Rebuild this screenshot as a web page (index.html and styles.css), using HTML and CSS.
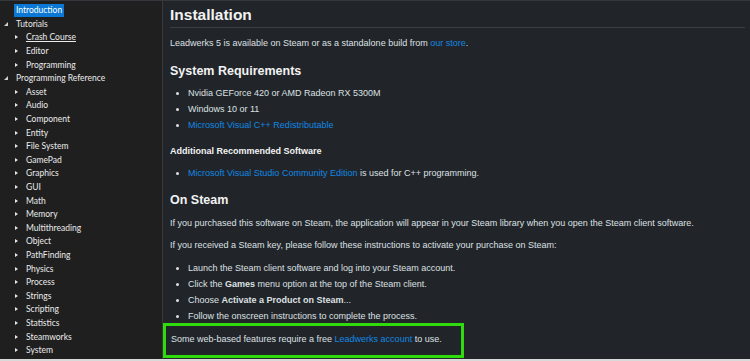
FILE: index.html
```html
<!DOCTYPE html>
<html>
<head>
    <title>Installation</title>
    <link rel="stylesheet" href="styles.css">
</head>
<body>
    <div class="app">
        <nav class="sidebar">
            <div class="node"><span class="label selected">Introduction</span></div>
            <div class="node"><span class="arrow open"></span><span class="label">Tutorials</span></div>
            <div class="node child"><span class="arrow"></span><span class="label hover">Crash Course</span></div>
            <div class="node child"><span class="arrow"></span><span class="label">Editor</span></div>
            <div class="node child"><span class="arrow"></span><span class="label">Programming</span></div>
            <div class="node"><span class="arrow open"></span><span class="label">Programming Reference</span></div>
            <div class="node child"><span class="arrow"></span><span class="label">Asset</span></div>
            <div class="node child"><span class="arrow"></span><span class="label">Audio</span></div>
            <div class="node child"><span class="arrow"></span><span class="label">Component</span></div>
            <div class="node child"><span class="arrow"></span><span class="label">Entity</span></div>
            <div class="node child"><span class="arrow"></span><span class="label">File System</span></div>
            <div class="node child"><span class="arrow"></span><span class="label">GamePad</span></div>
            <div class="node child"><span class="arrow"></span><span class="label">Graphics</span></div>
            <div class="node child"><span class="arrow"></span><span class="label">GUI</span></div>
            <div class="node child"><span class="arrow"></span><span class="label">Math</span></div>
            <div class="node child"><span class="arrow"></span><span class="label">Memory</span></div>
            <div class="node child"><span class="arrow"></span><span class="label">Multithreading</span></div>
            <div class="node child"><span class="arrow"></span><span class="label">Object</span></div>
            <div class="node child"><span class="arrow"></span><span class="label">PathFinding</span></div>
            <div class="node child"><span class="arrow"></span><span class="label">Physics</span></div>
            <div class="node child"><span class="arrow"></span><span class="label">Process</span></div>
            <div class="node child"><span class="arrow"></span><span class="label">Strings</span></div>
            <div class="node child"><span class="arrow"></span><span class="label">Scripting</span></div>
            <div class="node child"><span class="arrow"></span><span class="label">Statistics</span></div>
            <div class="node child"><span class="arrow"></span><span class="label">Steamworks</span></div>
            <div class="node child"><span class="arrow"></span><span class="label">System</span></div>
        </nav>

        <main class="content">
            <h1>Installation</h1>
            <p class="intro">Leadwerks 5 is available on Steam or as a standalone build from <a href="#">our store</a>.</p>

            <h2>System Requirements</h2>
            <ul class="req-list">
                <li>Nvidia GEForce 420 or AMD Radeon RX 5300M</li>
                <li>Windows 10 or 11</li>
                <li><a href="#">Microsoft Visual C++ Redistributable</a></li>
            </ul>

            <h3>Additional Recommended Software</h3>
            <ul class="soft-list">
                <li><a href="#">Microsoft Visual Studio Community Edition</a> is used for C++ programming.</li>
            </ul>

            <h2 class="steam-title">On Steam</h2>
            <p class="steam-text">If you purchased this software on Steam, the application will appear in your Steam library when you open the Steam client software.</p>
            <p class="key-text">If you received a Steam key, please follow these instructions to activate your purchase on Steam:</p>
            <ul class="steps">
                <li>Launch the Steam client software and log into your Steam account.</li>
                <li>Click the <b>Games</b> menu option at the top of the Steam client.</li>
                <li>Choose <b>Activate a Product on Steam</b>...</li>
                <li>Follow the onscreen instructions to complete the process.</li>
            </ul>

            <div class="highlight">
                <p>Some web-based features require a free <a href="#">Leadwerks account</a> to use.</p>
            </div>
        </main>
    </div>
    <div class="bottom-edge"></div>
</body>
</html>
```

FILE: styles.css
```css
html, body {
    margin: 0;
    padding: 0;
}
body {
    width: 750px;
    height: 361px;
    overflow: hidden;
    background-color: #212529;
    display: flex;
    flex-direction: column;
}
.app {
    flex: 1;
    display: flex;
    min-height: 0;
    border-top: 1px solid #34373b;
}
.sidebar {
    width: 162px;
    flex-shrink: 0;
    background-color: #1f1f20;
    border-right: 1px solid #38393b;
    padding-top: 3px;
    font-family: Lato, "Noto Sans", sans-serif;
    font-size: 8.5px;
    color: #ebebeb;
}
.node {
    height: 13.6px;
    display: flex;
    align-items: center;
    padding-left: 4px;
}
.node.child {
    padding-left: 14px;
}
.arrow {
    width: 12px;
    height: 13px;
    flex-shrink: 0;
    position: relative;
}
.arrow::before {
    content: "";
    position: absolute;
    left: 1px;
    top: 4px;
    border-left: 3px solid #e6e6e6;
    border-top: 2.5px solid transparent;
    border-bottom: 2.5px solid transparent;
}
.arrow.open::before {
    left: 0;
    top: 4px;
    border: none;
    width: 0;
    height: 0;
    border-right: 4px solid #cfcfcf;
    border-top: 4px solid transparent;
}
.label {
    white-space: nowrap;
    line-height: 13px;
}
.label.selected {
    margin-left: 10px;
    background-color: #0a78d4;
    color: #fff;
    padding: 0 2px;
}
.label.hover {
    text-decoration: underline;
}

.content {
    flex: 1;
    padding: 0 5px 0 7px;
    font-family: "Liberation Sans", Arial, sans-serif;
    font-size: 9px;
    color: #dde0e3;
    display: flex;
    flex-direction: column;
    align-items: flex-start;
}
.content a {
    color: #1287e3;
    text-decoration: none;
}
.content p, .content ul, .content h1, .content h2, .content h3 {
    margin: 0;
}
.content h1 {
    align-self: stretch;
    font-size: 15.5px;
    line-height: 20px;
    margin-top: 4px;
    padding-bottom: 2px;
    border-bottom: 1px solid #3a3e43;
    color: #f2f2f2;
}
.content p {
    line-height: 12px;
}
.intro {
    margin-top: 9px !important;
}
.content h2 {
    font-size: 12.5px;
    line-height: 16px;
    color: #f2f2f2;
}
.content h2 {
    margin-top: 14px;
}
.content h3 {
    font-size: 9px;
    line-height: 12px;
    margin-top: 12px;
    color: #f2f2f2;
}
.content ul {
    padding-left: 18px;
}
.content li {
    line-height: 16px;
}
.req-list {
    margin-top: 6px !important;
}
.soft-list {
    margin-top: 8px !important;
}
.content h2.steam-title {
    margin-top: 11px;
}
.steam-text {
    margin-top: 9px !important;
}
.key-text {
    margin-top: 10px !important;
}
.steps {
    margin-top: 9px !important;
}
.highlight {
    margin: -1px 0 0 -7px;
    border: 3px solid #2fdb0c;
    padding: 7px 4px 10px 4px;
    width: 287px;
}
.highlight p {
    padding-left: 1px;
}
.bottom-edge {
    height: 2px;
    background-color: #d9d9d9;
}
```
